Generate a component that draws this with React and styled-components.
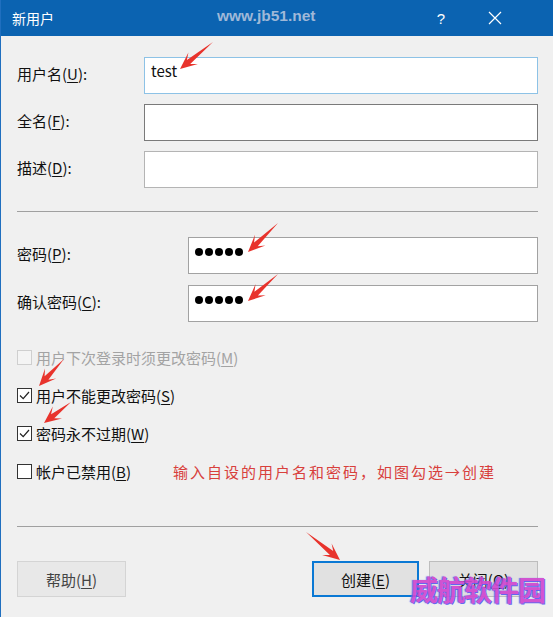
import React from "react"
import styled, { createGlobalStyle } from "styled-components"

const GlobalStyle = createGlobalStyle`
  body {
    margin: 0;
    font-family: "Noto Sans CJK SC", "Noto Sans", sans-serif;
  }
`

const arrows = [
  [212, 42, 179, 69],
  [277, 223, 247, 252],
  [277, 274, 247, 301],
  [63, 359, 38, 386],
  [70, 402, 43, 423],
  [305, 532, 339, 560],
]

function arrowPoints([x1, y1, x2, y2]) {
  const len = Math.hypot(x2 - x1, y2 - y1)
  const dx = (x2 - x1) / len
  const dy = (y2 - y1) / len
  const nx = -dy
  const ny = dx
  const at = (d, w) => `${(x2 - dx * d + nx * w).toFixed(1)},${(y2 - dy * d + ny * w).toFixed(1)}`
  return [
    `${x1},${y1}`,
    at(11, 2.6),
    at(17, 7.5),
    `${x2},${y2}`,
    at(17, -7.5),
    at(11, -2.6),
  ].join(" ")
}

export default function App() {
  return (
    <>
      <GlobalStyle />
      <Window>
        <TitleBar>
          <Title>新用户</Title>
          <SiteMark>www.jb51.net</SiteMark>
          <TitleButton>?</TitleButton>
          <TitleButton>
            <svg width="14" height="14" viewBox="0 0 14 14">
              <path d="M1 1 L13 13 M13 1 L1 13" stroke="#fff" strokeWidth="1.2" />
            </svg>
          </TitleButton>
        </TitleBar>

        <Body>
          <FieldGroup $label={127} $gap={10}>
            <Label>用户名(<u>U</u>):</Label>
            <Field $focus>test</Field>
            <Label>全名(<u>F</u>):</Label>
            <Field $tone="#7a7a7a" />
            <Label>描述(<u>D</u>):</Label>
            <Field $tone="#b4b4b4" />
          </FieldGroup>

          <Rule $top={23} $bottom={25} />

          <FieldGroup $label={171} $gap={11}>
            <Label>密码(<u>P</u>):</Label>
            <Field>
              <Dots>{[0, 1, 2, 3, 4].map(i => <Dot key={i} />)}</Dots>
            </Field>
            <Label>确认密码(<u>C</u>):</Label>
            <Field>
              <Dots>{[0, 1, 2, 3, 4].map(i => <Dot key={i} />)}</Dots>
            </Field>
          </FieldGroup>

          <Checks>
            <CheckRow $disabled>
              <Box $disabled />
              用户下次登录时须更改密码(<u>M</u>)
            </CheckRow>
            <CheckRow>
              <Box>
                <svg width="13" height="13" viewBox="0 0 13 13">
                  <path d="M2 6.5 L5.2 9.6 L11 3" fill="none" stroke="#222" strokeWidth="1.2" />
                </svg>
              </Box>
              用户不能更改密码(<u>S</u>)
            </CheckRow>
            <CheckRow>
              <Box>
                <svg width="13" height="13" viewBox="0 0 13 13">
                  <path d="M2 6.5 L5.2 9.6 L11 3" fill="none" stroke="#222" strokeWidth="1.2" />
                </svg>
              </Box>
              密码永不过期(<u>W</u>)
            </CheckRow>
            <CheckRow>
              <Box />
              帐户已禁用(<u>B</u>)
              <Note>输入自设的用户名和密码，如图勾选→创建</Note>
            </CheckRow>
          </Checks>

          <Rule $top={43} $bottom={34} />

          <Buttons>
            <Button $variant="faded">帮助(<u>H</u>)</Button>
            <Spacer />
            <Button $variant="default">创建(<u>E</u>)</Button>
            <Button>关闭(<u>O</u>)</Button>
          </Buttons>
        </Body>

        <Arrows width="553" height="617" viewBox="0 0 553 617">
          {arrows.map((a, i) => (
            <polygon key={i} points={arrowPoints(a)} fill="#e8332c" />
          ))}
        </Arrows>

        <Stamp>威航软件园</Stamp>
      </Window>
    </>
  )
}

const Window = styled.div`
  position: relative;
  width: 553px;
  height: 617px;
  box-sizing: border-box;
  background: #f0f0f0;
  border-left: 1px solid #1f6fbf;
  overflow: hidden;
`

const TitleBar = styled.div`
  height: 36px;
  background: #0b63b1;
  display: flex;
  align-items: center;
  padding: 0 43px 0 11px;
  color: #fff;
`

const Title = styled.div`
  font-size: 14px;
  width: 42px;
`

const SiteMark = styled.div`
  margin-left: 163px;
  flex: 1;
  font-family: "Liberation Sans", Arial, sans-serif;
  font-weight: bold;
  font-size: 15.5px;
  color: #9fb8d8;
  margin-top: -4px;
`

const TitleButton = styled.div`
  width: 30px;
  margin-left: 24px;
  display: flex;
  justify-content: center;
  font-family: "Liberation Sans", Arial, sans-serif;
  font-size: 15px;
`

const Body = styled.div`
  padding: 21px 15px 0 16px;
`

const FieldGroup = styled.div`
  display: grid;
  grid-template-columns: ${p => p.$label}px 1fr;
  grid-auto-rows: 37px;
  row-gap: ${p => p.$gap}px;
  align-items: center;
`

const Label = styled.div`
  font-size: 15px;
  color: #111;
  padding-bottom: 5px;

  u {
    text-decoration-thickness: 1px;
    text-underline-offset: 2px;
  }
`

const Field = styled.div`
  height: 37px;
  box-sizing: border-box;
  background: #fff;
  border: 1px solid ${p => (p.$focus ? "#8dc2e6" : p.$tone || "#a2a2a2")};
  padding: 2px 6px 0;
  font-size: 15px;
  color: #111;
  display: flex;
  align-items: flex-start;
`

const Dots = styled.div`
  display: flex;
  gap: 2px;
  padding-top: 8px;
`

const Dot = styled.span`
  width: 8px;
  height: 8px;
  border-radius: 50%;
  background: #000;
`

const Rule = styled.div`
  height: 1px;
  background: #a0a0a0;
  margin: ${p => p.$top}px 0 ${p => p.$bottom}px;
`

const Checks = styled.div`
  margin-top: 23px;
  display: flex;
  flex-direction: column;
  gap: 14px;
`

const CheckRow = styled.div`
  height: 24px;
  display: flex;
  align-items: center;
  font-size: 15px;
  color: ${p => (p.$disabled ? "#a3a3a3" : "#111")};

  u {
    text-underline-offset: 2px;
  }
`

const Box = styled.span`
  width: 15px;
  height: 15px;
  box-sizing: border-box;
  border: 1px solid ${p => (p.$disabled ? "#cfcfcf" : "#333")};
  background: ${p => (p.$disabled ? "#f4f4f4" : "#fff")};
  margin-right: 4px;
  display: flex;
  align-items: center;
  justify-content: center;
`

const Note = styled.span`
  margin-left: 42px;
  font-size: 15px;
  letter-spacing: 2px;
  color: #d8403c;
`

const Buttons = styled.div`
  display: flex;
  gap: 10px;
  height: 36px;
`

const Spacer = styled.div`
  flex: 1;
`

const Button = styled.div`
  width: ${p => (p.$variant === "default" ? 107 : 109)}px;
  box-sizing: border-box;
  display: flex;
  align-items: center;
  justify-content: center;
  font-size: 15px;
  color: ${p => (p.$variant === "faded" ? "#444" : "#111")};
  background: ${p => (p.$variant === "faded" ? "#e8e8e8" : "#e1e1e1")};
  border: ${p =>
    p.$variant === "default"
      ? "2px solid #0a78d4"
      : p.$variant === "faded"
      ? "1px solid #d4d4d4"
      : "1px solid #bdbdbd"};

  u {
    text-underline-offset: 2px;
  }
`

const Arrows = styled.svg`
  position: absolute;
  top: 0;
  left: 0;
  pointer-events: none;
`

const Stamp = styled.div`
  position: absolute;
  right: 8px;
  bottom: 8px;
  font-size: 28px;
  font-weight: bold;
  letter-spacing: -1px;
  color: #d048cf;
  opacity: 0.92;
  text-shadow: 1px 1px 0 #5a5cf0, -1px 0 1px #6a6cf5;
`
